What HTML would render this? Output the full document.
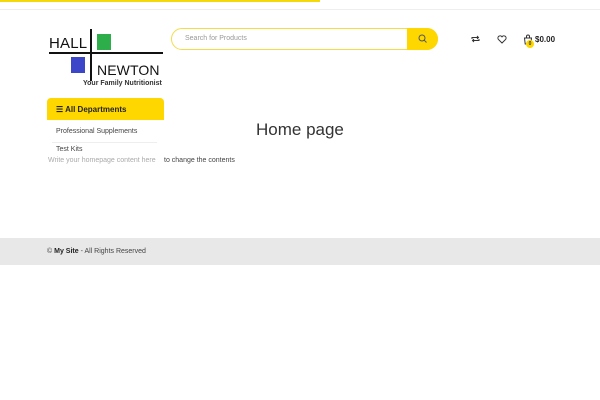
<!DOCTYPE html>
<html><head><style>
*{margin:0;padding:0;box-sizing:border-box}
body{width:600px;height:400px;background:#fff;font-family:"Liberation Sans",sans-serif;position:relative;overflow:hidden;color:#333}
.a{position:absolute}
</style></head><body>
<div class="a" style="left:0;top:0;width:320px;height:2px;background:#f5d90a"></div>
<div class="a" style="left:0;top:9px;width:600px;height:1px;background:#eee"></div>
<!-- logo -->
<div class="a" style="left:49px;top:35px;font-size:15px;color:#111;letter-spacing:0.2px">HALL</div>
<div class="a" style="left:90px;top:29px;width:2px;height:52px;background:#111"></div>
<div class="a" style="left:49px;top:52px;width:114px;height:2px;background:#111"></div>
<div class="a" style="left:97px;top:34px;width:14px;height:16px;background:#2eae4a"></div>
<div class="a" style="left:71px;top:57px;width:14px;height:16px;background:#3b46c8"></div>
<div class="a" style="left:97px;top:62px;font-size:14px;color:#111;letter-spacing:0.1px">NEWTON</div>
<div class="a" style="left:83px;top:80px;font-size:7px;font-weight:bold;color:#333">Your Family Nutritionist</div>
<!-- departments -->
<div class="a" style="left:47px;top:98px;width:117px;height:22px;background:#fed700;border-radius:4px 4px 0 0;font-size:8px;font-weight:bold;padding:7px 0 0 9px;color:#222">&#9776; All Departments</div>
<div class="a" style="left:56px;top:128px;font-size:7px;color:#444">Professional Supplements</div>
<div class="a" style="left:52px;top:142px;width:105px;height:1px;background:#eee"></div>
<div class="a" style="left:56px;top:146px;font-size:7px;color:#444">Test Kits</div>
<div class="a" style="left:48px;top:157px;font-size:7px;color:#aaa">Write your homepage content here</div>
<div class="a" style="left:164px;top:157px;font-size:7px;color:#444">to change the contents</div>
<!-- search -->
<div class="a" style="left:171px;top:28px;width:267px;height:22px;border:1.5px solid #f3dc4a;border-radius:11px;background:#fff"></div>
<div class="a" style="left:407px;top:28px;width:31px;height:22px;background:#fed700;border-radius:0 11px 11px 0"></div>
<svg class="a" style="left:418px;top:34px" width="9" height="9" viewBox="0 0 9 9"><circle cx="4" cy="4" r="3" fill="none" stroke="#555" stroke-width="1"/><path d="M6.2 6.2L8.5 8.5" stroke="#555"/></svg>
<div class="a" style="left:185px;top:35px;font-size:7px;color:#999">Search for Products</div>
<!-- icons -->
<svg class="a" style="left:471px;top:35px" width="9" height="8" viewBox="0 0 9 8"><path d="M1 4V2.5h6.5M6 1l1.5 1.5L6 4M8 4v1.5H1.5M3 7L1.5 5.5 3 4" fill="none" stroke="#333" stroke-width="1"/></svg>
<svg class="a" style="left:497px;top:35px" width="10" height="9" viewBox="0 0 10 9"><path d="M5 8L1.3 4.3A2 2 0 0 1 5 1.8 2 2 0 0 1 8.7 4.3Z" fill="none" stroke="#333" stroke-width="1"/></svg>
<svg class="a" style="left:523px;top:34px" width="10" height="11" viewBox="0 0 10 11"><path d="M1.5 4h7l-.7 6h-5.6Z M3.5 4V2.5a1.5 1.5 0 0 1 3 0V4" fill="none" stroke="#333" stroke-width="1"/></svg>
<div class="a" style="left:526px;top:40px;width:8px;height:8px;border-radius:50%;background:#fed700;font-size:5px;text-align:center;line-height:8px;font-weight:bold">0</div>
<div class="a" style="left:535px;top:35px;font-size:8px;font-weight:bold;color:#222">$0.00</div>
<!-- content -->
<div class="a" style="left:256px;top:120px;font-size:17px;color:#333">Home page</div>
<!-- footer -->
<div class="a" style="left:0;top:238px;width:600px;height:27px;background:#e8e8e8"></div>
<div class="a" style="left:47px;top:248px;font-size:7px;color:#444">© <b style="color:#222">My Site</b> - All Rights Reserved</div>
</body></html>
